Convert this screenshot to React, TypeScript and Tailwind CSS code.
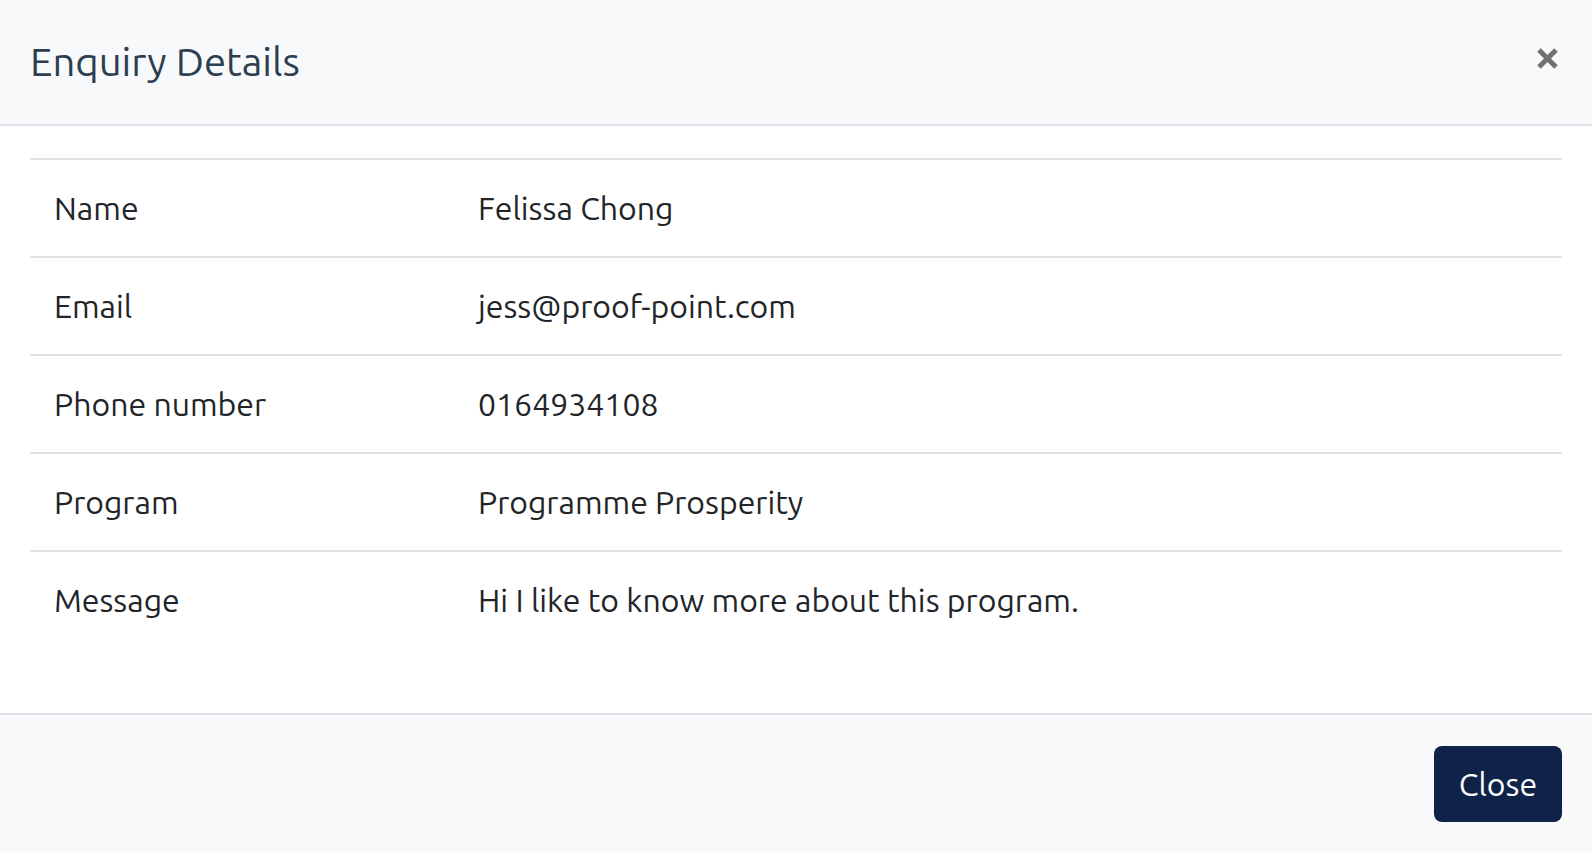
import React from 'react';

const rows: { label: string; value: string }[] = [
  { label: 'Name', value: 'Felissa Chong' },
  { label: 'Email', value: 'jess@proof-point.com' },
  { label: 'Phone number', value: '0164934108' },
  { label: 'Program', value: 'Programme Prosperity' },
  { label: 'Message', value: 'Hi I like to know more about this program.' },
];

export default function App() {
  return (
    <div
      className="w-[1592px] h-[852px] bg-white flex flex-col overflow-hidden"
      style={{ fontFamily: 'Ubuntu, Lato, "Liberation Sans", sans-serif' }}
    >
      {/* Header */}
      <div className="h-[126px] shrink-0 bg-[#f8f9fa] border-b-2 border-[#dee2e6] flex items-center justify-between pl-[30px] pr-[33px]">
        <h5 className="text-[40px] leading-[60px] text-[#2c3e50] font-normal">Enquiry Details</h5>
        <button className="w-[23px] h-[23px] flex items-center justify-center -mt-[8px]">
          <svg width="23" height="23" viewBox="0 0 23 23">
            <path d="M3 3 L20 20 M20 3 L3 20" stroke="#717171" strokeWidth="5" strokeLinecap="butt" />
          </svg>
        </button>
      </div>

      {/* Body */}
      <div className="flex-1 px-[30px] pt-[32px]">
        <table className="w-full border-collapse text-[32px] leading-[48px] text-[#212529]">
          <tbody>
            {rows.map((r) => (
              <tr key={r.label} className="border-t-2 border-[#dee2e6]">
                <td className="w-[424px] px-[24px] py-[24px] align-top">{r.label}</td>
                <td className="px-[24px] py-[24px] align-top">{r.value}</td>
              </tr>
            ))}
          </tbody>
        </table>
      </div>

      {/* Footer */}
      <div className="h-[139px] shrink-0 bg-[#f8f9fa] border-t-2 border-[#dee2e6] flex items-center justify-end pr-[30px]">
        <button className="w-[128px] h-[76px] rounded-lg bg-[#0f2349] text-white text-[32px] leading-[48px]">
          Close
        </button>
      </div>
    </div>
  );
}
